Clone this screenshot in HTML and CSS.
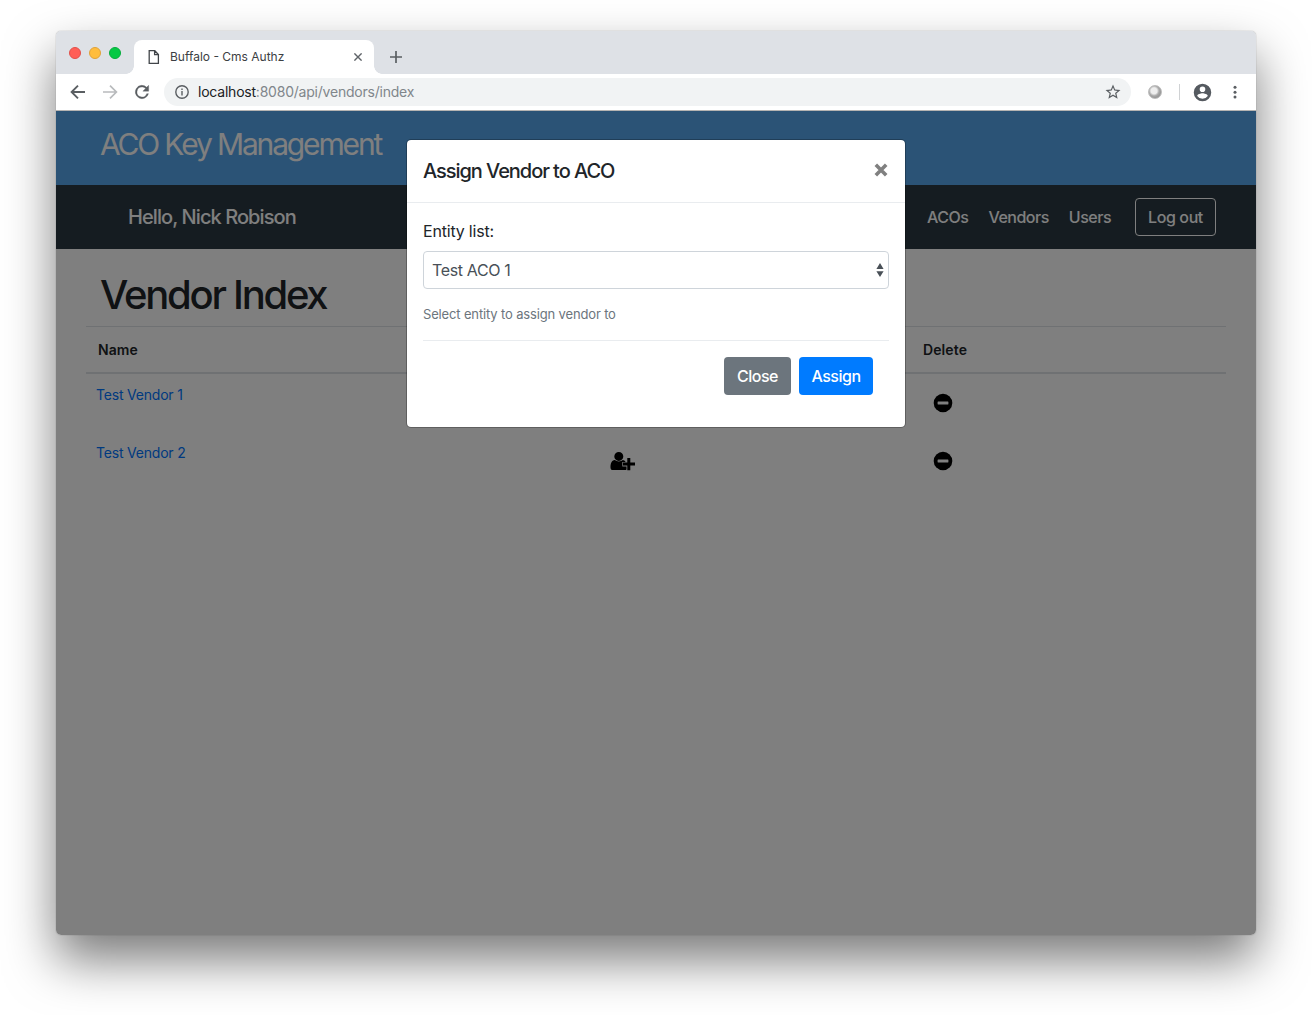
FILE: index.html
```html
<!DOCTYPE html>
<html lang="en">
<head>
<meta charset="utf-8">
<title>Buffalo - Cms Authz</title>
<link rel="stylesheet" href="styles.css">
</head>
<body>
<div class="window">
  <div class="tabstrip">
    <div class="lights"><i class="light red"></i><i class="light amber"></i><i class="light green"></i></div>
    <div class="tab">
      <svg class="tab-doc" width="12" height="14" viewBox="0 0 12 14" fill="none" stroke="#414549" stroke-width="1.3"><path d="M1.2.7h5.6l3.6 3.8v8.8H1.2zM6.6.9v3.8h3.7"/></svg>
      <span class="tab-title">Buffalo - Cms Authz</span>
      <svg class="tab-close" width="8" height="8" viewBox="0 0 8 8" stroke="#5f6368" stroke-width="1.4"><path d="M.4.4l7.2 7.2M7.6.4L.4 7.6"/></svg>
    </div>
    <svg class="new-tab" width="12" height="12" viewBox="0 0 12 12" stroke="#5a5e62" stroke-width="1.7"><path d="M6 0v12M0 6h12"/></svg>
  </div>
  <div class="toolbar">
    <svg width="24" height="24" viewBox="0 0 24 24" fill="none" stroke="#5a5e62" stroke-width="1.9"><path d="M19 12H6M12 5.6L5.6 12l6.4 6.4"/></svg>
    <svg width="24" height="24" viewBox="0 0 24 24" fill="none" stroke="#b9bbbd" stroke-width="1.7"><path d="M5 12h13M12 5.6l6.4 6.4-6.4 6.4"/></svg>
    <svg width="20" height="20" viewBox="0 0 24 24" fill="#5a5e62" stroke="#5a5e62" stroke-width=".4"><path d="M17.65 6.35A8 8 0 1 0 19.73 14h-2.08A6 6 0 1 1 12 6c1.66 0 3.14.69 4.22 1.78L13 11h7V4z"/></svg>
    <div class="address">
      <svg width="14" height="14" viewBox="0 0 14 14" fill="none" stroke="#5a5e62" stroke-width="1.4"><circle cx="7" cy="7" r="6.2"/><path d="M7 6v4.5M7 3.4V5"/></svg>
      <span class="url"><b>localhost</b>:8080/api/vendors/index</span>
      <svg class="star" width="18" height="18" viewBox="0 0 24 24" fill="#5a5e62"><path d="M22 9.24l-7.19-.62L12 2 9.19 8.63 2 9.24l5.46 4.73L5.82 21 12 17.27 18.18 21l-1.63-7.03zM12 15.4l-3.76 2.27 1-4.28-3.32-2.88 4.38-.38L12 6.1l1.71 4.04 4.38.38-3.32 2.88 1 4.28z"/></svg>
    </div>
    <i class="extension"></i>
    <i class="divider"></i>
    <svg class="profile" width="21" height="21" viewBox="0 0 24 24" fill="#555a60"><path d="M12 2a10 10 0 1 0 0 20 10 10 0 0 0 0-20zm0 3a3 3 0 1 1 0 6.4A3.2 3.2 0 0 1 12 5zm0 14.2a7.2 7.2 0 0 1-6-3.22c.03-1.99 4-3.08 6-3.08s5.97 1.09 6 3.08a7.2 7.2 0 0 1-6 3.22z"/></svg>
    <svg class="menu" width="4" height="14" viewBox="0 0 4 14" fill="#5a5e62"><circle cx="2" cy="2.2" r="1.5"/><circle cx="2" cy="7.2" r="1.5"/><circle cx="2" cy="12" r="1.5"/></svg>
  </div>
  <div class="page">
    <header class="banner"><span class="banner-title">ACO Key Management</span></header>
    <nav class="navbar">
      <span class="hello">Hello, Nick Robison</span>
      <div class="links"><a>ACOs</a><a>Vendors</a><a>Users</a><a class="logout"><span>Log out</span></a></div>
    </nav>
    <main class="content">
      <h1><span>Vendor Index</span></h1>
      <div class="table">
        <div class="row head"><b class="name">Name</b><b></b><b class="del">Delete</b></div>
        <div class="row">
          <a>Test Vendor 1</a><span></span>
          <svg class="icon" width="20" height="20" viewBox="0 0 20 20"><circle cx="10" cy="10" r="9.3"/><rect x="4.6" y="8.5" width="10.8" height="3" rx=".4" fill="#fff"/></svg>
        </div>
        <div class="row">
          <a>Test Vendor 2</a>
          <svg class="icon" width="26" height="20" viewBox="0 0 26 20"><path d="M8.8.9a4.5 4.5 0 1 1 0 9 4.5 4.5 0 0 1 0-9z"/><path d="M4.8 9.1c2.300 1.900 5.800 1.900 8.100 0 1 .1 1.800.5 2.400 1.200v.6h-3v4.600h4.200v3.100c-.4.400-1 .5-1.600.5H3.200C1.300 19.100.5 18 .5 16.400.5 13 1.400 9.300 4.800 9.100z"/><path d="M17.300 6.900h3v4.600h4.700v3.100h-4.700v4.600h-3v-4.600h-4.300v-3.100h4.300z"/></svg>
          <svg class="icon" width="20" height="20" viewBox="0 0 20 20"><circle cx="10" cy="10" r="9.3"/><rect x="4.6" y="8.5" width="10.8" height="3" rx=".4" fill="#fff"/></svg>
        </div>
      </div>
    </main>
    <div class="backdrop">
      <section class="modal">
        <div class="modal-head">
          <span class="modal-title">Assign Vendor to ACO</span>
          <svg width="14" height="14" viewBox="0 0 14 14" stroke="#808080" stroke-width="3.6"><path d="M1.800 1.800l10.400 10.400M12.200 1.800L1.800 12.200"/></svg>
        </div>
        <div class="modal-body">
          <label><span>Entity list:</span></label>
          <div class="select"><span>Test ACO 1</span><svg width="8" height="14" viewBox="0 0 8 14" fill="#495057"><path d="M4 0l3.600 6H.4zM.4 8.200h7.200L4 14z"/></svg></div>
          <small><span>Select entity to assign vendor to</span></small>
          <div class="modal-foot"><span class="btn close"><span>Close</span></span><span class="btn assign"><span>Assign</span></span></div>
        </div>
      </section>
    </div>
  </div>
</div>
</body>
</html>
```
FILE: styles.css
```css
* { box-sizing: border-box; }
body { margin: 0; height: 1015px; padding: 31px 56px 80px; background: #fff; font: 16px/24px Inter, "Liberation Sans", sans-serif; overflow: hidden; }
svg { display: block; flex: none; }
.window { width: 1200px; height: 904px; border-radius: 5px; overflow: hidden; display: flex; flex-direction: column; box-shadow: 0 0 1px rgba(0,0,0,.5), 0 25px 50px rgba(0,0,0,.52); white-space: nowrap; }

.tabstrip { height: 43px; background: #dee1e6; display: flex; align-items: flex-start; }
.lights { display: flex; gap: 8px; padding: 16px 0 0 13px; width: 78px; }
.light { width: 12px; height: 12px; border-radius: 50%; border: 1px solid; }
.red { background: #ff5f57; border-color: #e2504a; }
.amber { background: #ffbd3e; border-color: #e0a23a; }
.green { background: #06c945; border-color: #06ad3d; }
.tab { width: 240px; height: 34px; margin-top: 9px; background: #fff; border-radius: 8px 8px 0 0; display: flex; align-items: center; padding: 0 12px 0 14px; position: relative; }
.tab::before, .tab::after { content: ""; position: absolute; bottom: 0; width: 8px; height: 8px; }
.tab::before { left: -8px; background: radial-gradient(circle at 0 0, transparent 7.5px, #fff 8px); }
.tab::after { right: -8px; background: radial-gradient(circle at 100% 0, transparent 7.5px, #fff 8px); }
.tab-title { margin-left: 10px; font-size: 12px; color: #3c4043; flex: 1; }
.new-tab { margin: 20px 0 0 16px; }

.toolbar { height: 37px; background: #fff; border-bottom: 1px solid #b6b4b2; display: flex; align-items: center; padding: 0 19px 0 10px; }
.toolbar > svg:nth-child(2) { margin-left: 8px; }
.toolbar > svg:nth-child(3) { margin-left: 10px; }
.address { margin-left: 12px; width: 967px; height: 28px; border-radius: 14px; background: #f1f3f4; display: flex; align-items: center; padding: 0 9px 0 11px; }
.url { margin-left: 9px; font-size: 14px; letter-spacing: -.22px; color: #80868b; flex: 1; }
.url b { color: #202124; font-weight: 400; }
.extension { margin-left: 17px; width: 14px; height: 14px; border-radius: 50%; background: radial-gradient(circle at 42% 40%, #eee 0 3px, #aaa 5px, #969696 7px); border: 1px solid #bbb; }
.divider { margin-left: 17px; width: 1px; height: 16px; background: #d0d2d4; }
.profile { margin-left: 12px; }
.menu { margin-left: 20px; }

.page { flex: 1; position: relative; background: #fff; color: #212529; display: flex; flex-direction: column; }
.banner { height: 74px; background: #56a6ec; color: #fff; padding: 12px 0 0 44px; font-size: 30px; line-height: 42px; }
.banner-title { letter-spacing: -2.15px; }
.navbar { height: 64px; background: #2a3842; color: #fff; display: flex; align-items: center; justify-content: space-between; padding: 0 40px 0 72px; font-weight: 500; }
.hello { font-size: 20px; letter-spacing: -.92px; }
.links { display: flex; align-items: center; gap: 20px; letter-spacing: -.5px; }
.logout { margin-left: 4px; width: 81px; height: 38px; border: 1px solid #fff; border-radius: 4px; display: flex; align-items: center; justify-content: center; letter-spacing: -.4px; }
.content { padding: 0 30px; }
h1 { margin: 0; padding: 22px 0 0 14px; height: 77px; font-size: 40px; line-height: 48px; font-weight: 500; letter-spacing: -2.25px; }
.table { border-top: 1px solid #dee2e6; font-size: 14px; line-height: 22px; }
.row { display: grid; grid-template-columns: 514px 323px 1fr; height: 58px; padding: 10px 0 0 10px; align-items: start; }
.head { height: 47px; padding: 0 0 0 12px; align-items: center; border-bottom: 2px solid #dee2e6; }
.head b { font-weight: 600; letter-spacing: .1px; }
.del { margin-left: -12px; }
.row a { color: #0074ff; letter-spacing: -.2px; }
.icon { margin-top: 9px; }

.backdrop { position: absolute; inset: 0; background: rgba(0,0,0,.5); padding-top: 28px; }
.modal { width: 500px; margin-left: 350px; background: #fff; background-clip: padding-box; border: 1px solid rgba(0,0,0,.25); border-radius: 5px; }
.modal-head { height: 63px; border-bottom: 1px solid #e9ecef; display: flex; align-items: center; justify-content: space-between; padding: 0 17px 0 16px; font-size: 20px; font-weight: 500; }
.modal-title { letter-spacing: -1.05px; }
.modal-head svg { margin-top: -2px; }
.modal-body { padding: 16px; display: flex; flex-direction: column; }
label { height: 32px; letter-spacing: -.2px; }
.select { height: 38px; border: 1px solid #ced4da; border-radius: 4px; display: flex; align-items: center; justify-content: space-between; padding: 0 4px 0 8px; color: #495057; letter-spacing: -.35px; }
small { height: 51px; padding-top: 13px; font-size: 13px; letter-spacing: -.15px; color: #6c757d; }
.modal-foot { border-top: 1px solid #e9ecef; padding: 16px; display: flex; justify-content: flex-end; gap: 8px; color: #fff; font-weight: 500; letter-spacing: -.5px; }
.btn { height: 38px; border-radius: 4px; display: flex; align-items: center; justify-content: center; }
.close { width: 67px; background: #6c757d; }
.assign { width: 74px; background: #007bff; }
```
